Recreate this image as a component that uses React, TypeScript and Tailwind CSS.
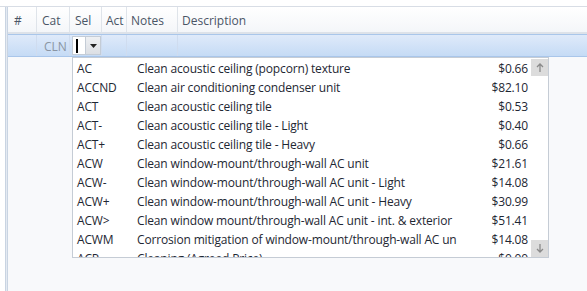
import React from "react";

const rows: [string, string, string][] = [
  ["AC", "Clean acoustic ceiling (popcorn) texture", "$0.66"],
  ["ACCND", "Clean air conditioning condenser unit", "$82.10"],
  ["ACT", "Clean acoustic ceiling tile", "$0.53"],
  ["ACT-", "Clean acoustic ceiling tile - Light", "$0.40"],
  ["ACT+", "Clean acoustic ceiling tile - Heavy", "$0.66"],
  ["ACW", "Clean window-mount/through-wall AC unit", "$21.61"],
  ["ACW-", "Clean window-mount/through-wall AC unit - Light", "$14.08"],
  ["ACW+", "Clean window-mount/through-wall AC unit - Heavy", "$30.99"],
  ["ACW>", "Clean window mount/through-wall AC unit - int. & exterior", "$51.41"],
  ["ACWM", "Corrosion mitigation of window-mount/through-wall AC un", "$14.08"],
  ["ACP", "Cleaning (Agreed Price)", "$0.00"],
];

export default function App() {
  return (
    <div
      className="relative w-[587px] h-[291px] overflow-hidden bg-[#f8f9fb] text-[12px] text-[#1e2733]"
      style={{ fontFamily: '"Open Sans", "Noto Sans", sans-serif' }}
    >
      <div className="h-[7px] bg-white border-b border-[#d8dde5]" />
      <div className="flex h-[284px]">
        <div className="w-[5px] bg-white" />
        <div className="w-[3px] border-l border-r border-[#c9d4e2] bg-[#e4eaf2]" />
        <div className="flex-1 flex flex-col">
          {/* header */}
          <div className="flex h-[27px] bg-gradient-to-b from-white to-[#f4f6f9] border-b-2 border-[#dde2e9] text-[#4a5566]">
            <div className="w-[29px] border-r border-[#dfe4ea] pl-[6px] pt-[5px]">#</div>
            <div className="w-[33px] border-r border-[#dfe4ea] pl-[5px] pt-[5px]">Cat</div>
            <div className="w-[32px] border-r border-[#dfe4ea] pl-[5px] pt-[5px]">Sel</div>
            <div className="w-[25px] border-r border-[#dfe4ea] pl-[4px] pt-[5px]">Act</div>
            <div className="w-[51px] border-r border-[#dfe4ea] pl-[4px] pt-[5px]">Notes</div>
            <div className="flex-1 pl-[4px] pt-[5px]">Description</div>
          </div>
          {/* selected row */}
          <div className="flex h-[23px] bg-gradient-to-b from-[#dfeafa] to-[#c5dbf5] border-t border-[#a9c6ea] border-b border-[#9fbfe6]">
            <div className="w-[29px] border-r border-[#cfdcef]" />
            <div className="w-[33px] border-r border-[#cfdcef] pl-[7px] pt-[3px] text-[#8a95a3]">CLN</div>
            <div className="w-[32px] border-r border-[#cfdcef] flex items-stretch py-[1px] pl-[2px]">
              <div className="w-[13px] bg-white border border-[#c4ccd6] border-r-0 flex items-center pl-[3px]">
                <div className="w-[2px] h-[14px] bg-black" />
              </div>
              <div className="w-[16px] bg-gradient-to-b from-[#eef0f3] to-[#dcdfe4] border border-[#c4ccd6] flex items-center justify-center">
                <svg width="7" height="4" viewBox="0 0 7 4"><path d="M0 0h7L3.5 4z" fill="#222" /></svg>
              </div>
            </div>
            <div className="w-[25px] border-r border-[#cfdcef]" />
            <div className="w-[51px] border-r border-[#cfdcef]" />
            <div className="flex-1" />
          </div>
          <div className="flex-1" />
        </div>
      </div>

      {/* dropdown */}
      <div className="absolute left-[72px] top-[57px] w-[477px] h-[201px] bg-white border border-[#c5ccd5] flex overflow-hidden">
        <div className="flex-1 pt-[1px] overflow-hidden tracking-[-0.16px]">
          {rows.map(([c, d, p]) => (
            <div key={c} className="flex h-[19.1px] items-center whitespace-nowrap">
              <div className="w-[64px] pl-[4px]">{c}</div>
              <div className="flex-1 overflow-hidden">{d}</div>
              <div className="w-[64px] text-right pr-[3px]">{p}</div>
            </div>
          ))}
        </div>
        <div className="w-[17px] flex flex-col justify-between">
          <div className="h-[17px] bg-[#dcdcdc] flex items-center justify-center mt-[1px]">
            <svg width="8" height="9" viewBox="0 0 8 9"><path d="M4 1v8M1 4l3-3 3 3" stroke="#8a8a8a" strokeWidth="1.3" fill="none" /></svg>
          </div>
          <div className="h-[17px] bg-[#dcdcdc] flex items-center justify-center">
            <svg width="8" height="9" viewBox="0 0 8 9"><path d="M4 0v8M1 5l3 3 3-3" stroke="#8a8a8a" strokeWidth="1.3" fill="none" /></svg>
          </div>
        </div>
      </div>
    </div>
  );
}
